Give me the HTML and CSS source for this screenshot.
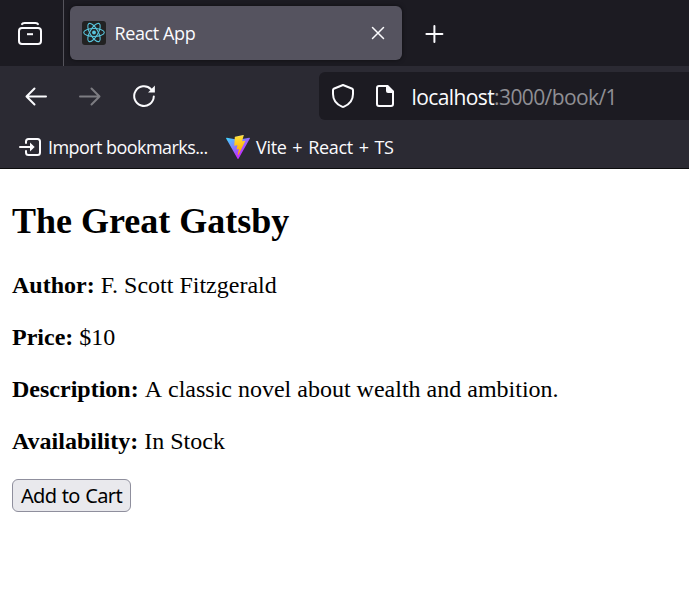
FILE: index.html
```html
<!DOCTYPE html>
<html lang="en">
<head>
<meta charset="utf-8">
<title>React App</title>
<link rel="stylesheet" href="styles.css">
</head>
<body>
<header class="browser">
  <div class="tabbar">
    <div class="firefox-view">
      <svg width="26" height="26" viewBox="0 0 26 26" fill="none" stroke="#fbfbfe" stroke-width="2" stroke-linecap="round">
        <path d="M5 3.1Q5.4 2 7.5 2H18.500Q20.600 2 21 3.100"/>
        <rect x="2" y="7" width="22" height="16" rx="3"/>
        <path d="M11 13.200H15" stroke-linecap="square"/>
      </svg>
    </div>
    <div class="tab">
      <svg class="favicon" width="24" height="24" viewBox="0 0 24 24" fill="none" stroke="#58c4dc" stroke-width="1.100">
        <rect width="24" height="24" rx="3" fill="#222" stroke="none"/>
        <ellipse cx="12" cy="11.500" rx="10.300" ry="4"/>
        <ellipse cx="12" cy="11.500" rx="10.300" ry="4" transform="rotate(60 12 11.500)"/>
        <ellipse cx="12" cy="11.500" rx="10.300" ry="4" transform="rotate(120 12 11.500)"/>
        <circle cx="12" cy="11.500" r="1.900" fill="#58c4dc" stroke="none"/>
      </svg>
      <span class="tab-title">React App</span>
      <svg class="close" width="14" height="14" viewBox="0 0 14 14" stroke="#fbfbfe" stroke-width="1.500" stroke-linecap="round"><path d="M1.500 1.500l11 11M12.500 1.500l-11 11"/></svg>
    </div>
    <svg class="new-tab" width="20" height="20" viewBox="0 0 20 20" stroke="#fbfbfe" stroke-width="2" stroke-linecap="round"><path d="M10.400 2v16M2.400 10h16"/></svg>
  </div>
  <div class="toolbar">
    <svg class="back" width="24" height="24" viewBox="0 0 24 24" fill="none" stroke="#fbfbfe" stroke-width="2" stroke-linecap="round" stroke-linejoin="round"><path d="M22 12.500H2.500M10.500 4.500l-8 8 8 8"/></svg>
    <svg class="forward" width="24" height="24" viewBox="0 0 24 24" fill="none" stroke="#7d7c82" stroke-width="2" stroke-linecap="round" stroke-linejoin="round"><path d="M2 12.500h19.500M13.500 4.500l8 8-8 8"/></svg>
    <svg class="reload" width="24" height="24" viewBox="0 0 24 24" fill="none" stroke="#fbfbfe" stroke-width="2" stroke-linecap="round"><path d="M21.800 12.500A9.800 9.800 0 1 1 19 5.200"/><path d="M22.900 1.600v6.800h-6.800z" fill="#fbfbfe" stroke="none"/></svg>
    <div class="urlbar">
      <svg class="shield" width="24" height="26" viewBox="0 0 24 26" fill="none" stroke="#fbfbfe" stroke-width="2" stroke-linejoin="round"><path d="M12 2L21.300 5.800Q22 6.200 22 7V11C22 17 18 21.500 13 23.700Q12 24.200 11 23.700C6 21.500 2 17 2 11V7Q2 6.200 2.700 5.800Z"/></svg>
      <svg class="page-icon" width="20" height="24" viewBox="0 0 20 24"><path d="M12 2H4Q2 2 2 4V20Q2 22 4 22H16Q18 22 18 20V8" fill="none" stroke="#fbfbfe" stroke-width="2"/><path d="M11 1h2l6 6v2h-6q-2 0-2-2z" fill="#fbfbfe"/></svg>
      <span class="url"><span class="host">localhost</span>:3000/book/1</span>
    </div>
  </div>
  <nav class="bookmarks">
    <span class="bookmark import">
      <svg class="import-icon" width="24" height="20" viewBox="0 0 24 20" fill="none" stroke="#fbfbfe" stroke-width="2" stroke-linecap="round"><path d="M7 6V4.500Q7 2 9.500 2H18.500Q21 2 21 4.500V15.500Q21 18 18.500 18H9.500Q7 18 7 15.500V14M1 10h12"/><path d="M11 5.500v9l4.700-4.500z" fill="#fbfbfe" stroke="none"/></svg>
      <span class="import-label">Import bookmarks...</span>
    </span>
    <span class="bookmark">
      <svg class="vite" width="24" height="24" viewBox="0 0 256 257">
        <defs>
          <linearGradient id="violet" x1="-.8%" x2="57.600%" y1="7.600%" y2="78.400%"><stop offset="0" stop-color="#41d1ff"/><stop offset="1" stop-color="#bd34fe"/></linearGradient>
          <linearGradient id="bolt" x1="43.400%" x2="50.300%" y1="2.200%" y2="89%"><stop offset="0" stop-color="#ffea83"/><stop offset=".083" stop-color="#ffdd35"/><stop offset="1" stop-color="#ffa800"/></linearGradient>
        </defs>
        <path fill="url(#violet)" d="M255.153 37.938L134.897 252.976c-2.483 4.440-8.862 4.466-11.382.048L.875 37.958c-2.746-4.814 1.371-10.646 6.827-9.670l120.385 21.517a6.537 6.537 0 0 0 2.322-.004l117.867-21.483c5.438-.991 9.574 4.796 6.877 9.620Z"/>
        <path fill="url(#bolt)" d="M185.432.063L96.440 17.501a3.268 3.268 0 0 0-2.634 3.014l-5.474 92.456a3.268 3.268 0 0 0 3.997 3.378l24.777-5.718c2.318-.535 4.413 1.507 3.936 3.838l-7.361 36.047c-.495 2.426 1.782 4.500 4.151 3.780l15.304-4.649c2.372-.720 4.652 1.360 4.150 3.788l-11.698 56.621c-.732 3.542 3.979 5.473 5.943 2.437l1.313-2.028l72.516-144.720c1.215-2.423-.880-5.186-3.540-4.672l-25.505 4.922c-2.396.462-4.435-1.770-3.759-4.114l16.646-57.705c.677-2.350-1.370-4.583-3.769-4.113Z"/>
      </svg>
      <span class="vite-label">Vite + React + TS</span>
    </span>
  </nav>
</header>
<main class="page">
  <h2>The Great Gatsby</h2>
  <p><strong>Author:</strong> F. Scott Fitzgerald</p>
  <p><strong>Price:</strong> $10</p>
  <p><strong>Description:</strong><span class="description"> A classic novel about wealth and ambition.</span></p>
  <p><strong>Availability:</strong> In Stock</p>
  <button class="cart" type="button">Add to Cart</button>
</main>
</body>
</html>
```
FILE: styles.css
```css
* { box-sizing: border-box; }
body {
  margin: 0;
  height: 591px;
  overflow: hidden;
  background: #fff;
  color: #000;
  font-family: "Liberation Serif", "Times New Roman", serif;
  font-size: 24px;
}
svg { display: block; flex: none; }
.browser {
  background: #2b2a33;
  border-bottom: 1px solid #0c0c0d;
  color: #fbfbfe;
  font: 18px/24px "Open Sans", "Noto Sans", sans-serif;
  white-space: nowrap;
}
.tabbar {
  display: flex;
  align-items: center;
  height: 66px;
  background: #1c1b22;
}
.firefox-view {
  width: 64px;
  height: 66px;
  padding: 21px 0 0 17px;
  border-right: 1px solid #55545c;
}
.tab {
  display: flex;
  align-items: center;
  width: 332px;
  height: 54px;
  margin-left: 6px;
  padding: 0 17px 0 12px;
  border-radius: 6px;
  background: #55535f;
  box-shadow: 0 0 4px rgba(0, 0, 0, .5);
}
.tab-title { margin-left: 8.5px; letter-spacing: -.4px; }
.close { margin-left: auto; }
.new-tab { margin-left: 22px; margin-top: 2px; }
.toolbar {
  display: flex;
  align-items: center;
  height: 60px;
  padding-left: 24px;
}
.forward { margin-left: 30px; }
.reload { margin-left: 30px; }
.urlbar {
  display: flex;
  align-items: center;
  flex: 1;
  height: 48px;
  margin-left: 163px;
  padding: 2px 0 0 12px;
  border-radius: 6px 0 0 6px;
  background: #1c1b22;
  color: #8f8f94;
  font-size: 21px;
}
.shield, .page-icon { margin-top: -2px; }
.page-icon { margin-left: 20px; }
.url { margin-left: 16.5px; letter-spacing: -.6px; }
.host { color: #fbfbfe; }
.bookmarks {
  display: flex;
  height: 42px;
  padding-left: 19px;
}
.bookmark { display: flex; align-items: center; }
.import { width: 207px; }
.import-label { margin-left: 5px; letter-spacing: -.56px; }
.vite-label { margin-left: 6px; letter-spacing: -.3px; word-spacing: 1.4px; }
.page { padding: 30px 12px 0; }
.page h2 { margin: 0 0 28px; font-size: 36px; line-height: 44px; }
.page p { margin: 0 0 24px; line-height: 28px; }
.description { font-kerning: none; }
.cart {
  display: block;
  width: 119px;
  height: 33px;
  padding: 0;
  border: 1px solid #8f8f9d;
  border-radius: 6px;
  background: #e9e9ed;
  color: #000;
  font: 20px/28px "Noto Sans", "Open Sans", sans-serif;
  letter-spacing: -.6px;
  word-spacing: .7px;
  white-space: nowrap;
}
```
